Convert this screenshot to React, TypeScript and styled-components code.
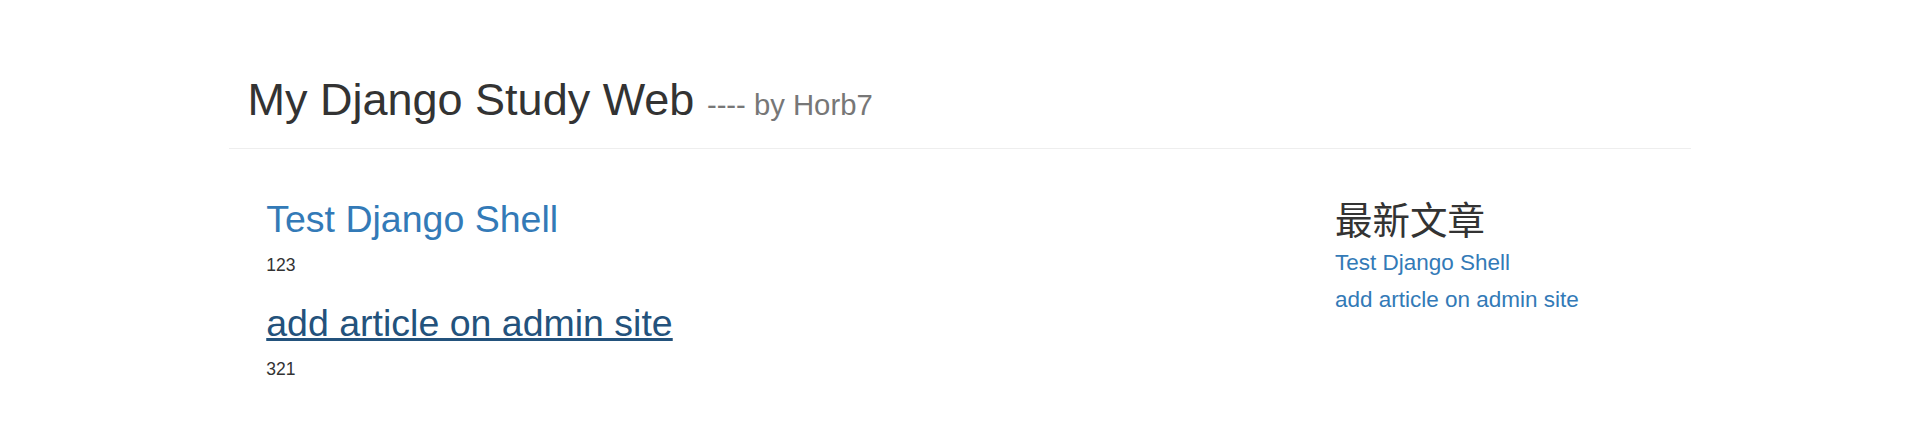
import React from 'react'
import styled, { createGlobalStyle } from 'styled-components'

const GlobalStyle = createGlobalStyle`
  html, body {
    margin: 0;
    padding: 0;
    background: #fff;
  }

  body {
    font-family: "Liberation Sans", Arial, "Noto Sans CJK SC", sans-serif;
    font-size: 17.5px;
    line-height: 1.42857;
    color: #333;
  }
`

const Container = styled.div`
  width: 1462.5px;
  margin: 0 auto;
  padding: 0 18.75px;
  box-sizing: border-box;
`

const PageHeader = styled(Container)`
  display: flow-root;
  margin-top: 50px;
  margin-bottom: 25px;
  padding-bottom: 11.25px;
  border-bottom: 1px solid #eee;
`

const Title = styled.h1`
  margin: 25px 0 12.5px;
  font-size: 45px;
  font-weight: 500;
  line-height: 1.1;
  color: #333;
`

const Byline = styled.small`
  font-size: 65%;
  font-weight: 400;
  line-height: 1;
  color: #777;
`

const Body = styled(Container)`
  display: flex;
`

const MainColumn = styled.div`
  width: 75%;
  padding: 0 18.75px;
  box-sizing: border-box;
  display: flow-root;
`

const SideColumn = styled.div`
  width: 25%;
  padding: 0 18.75px;
  box-sizing: border-box;
  display: flow-root;
`

const Heading = styled.h2`
  margin: 25px 0 12.5px;
  font-size: 37.5px;
  font-weight: 500;
  line-height: 1.1;
  color: #333;
`

const SideHeading = styled(Heading)`
  font-family: "Noto Sans CJK SC", "Liberation Sans", sans-serif;
  font-weight: 400;
  line-height: 41.25px;
  margin-top: 23px;
`

const Summary = styled.p`
  margin: 0 0 12.5px;
`

const Link = styled.a<{ $hover?: boolean }>`
  color: ${(p) => (p.$hover ? '#23527c' : '#337ab7')};
  text-decoration: ${(p) => (p.$hover ? 'underline' : 'none')};
  cursor: pointer;

  &:hover {
    color: #23527c;
    text-decoration: underline;
  }
`

const RecentItem = styled.h4`
  margin: 12.5px 0;
  font-size: 22.5px;
  font-weight: 400;
  line-height: 1.1;
`

const articles = [
  { title: 'Test Django Shell', content: '123' },
  { title: 'add article on admin site', content: '321' },
]

const App = () => {
  return (
    <>
      <GlobalStyle />
      <PageHeader>
        <Title>
          My Django Study Web <Byline>---- by Horb7</Byline>
        </Title>
      </PageHeader>

      <Body>
        <MainColumn>
          {articles.map((article, i) => (
            <div key={article.title}>
              <Heading>
                <Link href="#" $hover={i === 1}>
                  {article.title}
                </Link>
              </Heading>
              <Summary>{article.content}</Summary>
            </div>
          ))}
        </MainColumn>

        <SideColumn>
          <SideHeading>最新文章</SideHeading>
          {articles.map((article) => (
            <RecentItem key={article.title}>
              <Link href="#">{article.title}</Link>
            </RecentItem>
          ))}
        </SideColumn>
      </Body>
    </>
  )
}

export default App
